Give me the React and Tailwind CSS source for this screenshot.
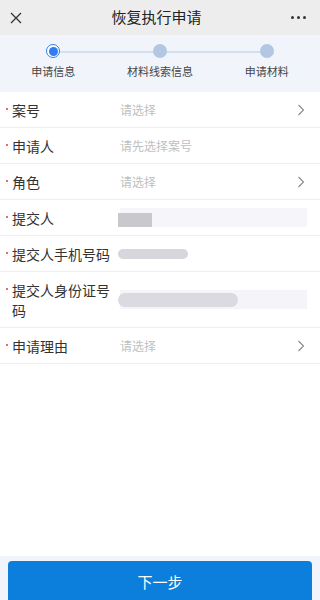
const font = { fontFamily: '"Noto Sans CJK SC", "Noto Sans", sans-serif' }

function Chevron() {
  return (
    <svg className="w-[12px] h-[12px] text-[#888]" viewBox="0 0 12 12" fill="none" stroke="currentColor" strokeWidth="1.1">
      <path d="M3.5 1l5 5-5 5" />
    </svg>
  )
}

function Row({ label, placeholder, arrow, children }) {
  return (
    <div className="flex items-center py-[7.5px] border-b border-[#eeeeee]">
      <div className="relative w-[120px] pl-[12px] pr-[6px] flex-shrink-0">
        <span className="absolute left-[6px] top-[8px] w-[2px] h-[2px] rounded-full bg-[#e23b3b]" />
        <span className="block text-[14px] leading-[20px] text-[#333]">{label}</span>
      </div>
      <div className="flex-1 min-w-0 pr-[13px] flex items-center">
        {children ? children : <span className="flex-1 text-[12px] text-[#c0c0c0]">{placeholder}</span>}
        {arrow && <Chevron />}
      </div>
    </div>
  )
}

export default function App() {
  return (
    <div className="w-[320px] h-[600px] overflow-hidden flex flex-col bg-white" style={font}>
      {/* header */}
      <div className="h-[35px] flex items-center justify-between px-[10px] bg-[#ededed] flex-shrink-0">
        <svg className="w-[12px] h-[12px] text-[#333]" viewBox="0 0 12 12" fill="none" stroke="currentColor" strokeWidth="1.3">
          <path d="M1 1l10 10M11 1L1 11" />
        </svg>
        <span className="text-[15px] text-[#222]">恢复执行申请</span>
        <div className="flex gap-[3px] pr-[4px]">
          <span className="w-[3px] h-[3px] rounded-full bg-[#333]" />
          <span className="w-[3px] h-[3px] rounded-full bg-[#333]" />
          <span className="w-[3px] h-[3px] rounded-full bg-[#333]" />
        </div>
      </div>

      {/* steps */}
      <div className="h-[57px] bg-[#f1f5fb] relative flex-shrink-0">
        <div className="absolute left-[52px] right-[54px] top-[16px] h-[2px] bg-[#d3e0f0]" />
        <div className="grid grid-cols-3 pt-[9px] relative">
          <div className="flex flex-col items-center">
            <span className="w-[14px] h-[14px] rounded-full border-[1.5px] border-[#2f7df0] bg-white flex items-center justify-center">
              <span className="w-[9px] h-[9px] rounded-full bg-[#2f7df0]" />
            </span>
            <span className="mt-[5px] text-[11px] text-[#444]">申请信息</span>
          </div>
          <div className="flex flex-col items-center">
            <span className="w-[14px] h-[14px] rounded-full bg-[#b3c7e2]" />
            <span className="mt-[5px] text-[11px] text-[#444]">材料线索信息</span>
          </div>
          <div className="flex flex-col items-center">
            <span className="w-[14px] h-[14px] rounded-full bg-[#b3c7e2]" />
            <span className="mt-[5px] text-[11px] text-[#444]">申请材料</span>
          </div>
        </div>
      </div>

      {/* form */}
      <div className="flex-1">
        <Row label="案号" placeholder="请选择" arrow />
        <Row label="申请人" placeholder="请先选择案号" />
        <Row label="角色" placeholder="请选择" arrow />
        <Row label="提交人">
          <div className="flex-1 h-[19px] bg-[#f6f6fa] flex items-end">
            <span className="w-[34px] h-[14px] bg-[#c9c9cd] -ml-[2px]" />
          </div>
        </Row>
        <Row label="提交人手机号码">
          <div className="flex-1 h-[19px] flex items-center">
            <span className="w-[70px] h-[10px] rounded-full bg-[#d6d6dc] -ml-[2px]" />
          </div>
        </Row>
        <Row label="提交人身份证号码">
          <div className="flex-1 h-[19px] bg-[#f4f4f9] flex items-center">
            <span className="w-[120px] h-[14px] rounded-full bg-[#dadae0] -ml-[2px]" />
          </div>
        </Row>
        <Row label="申请理由" placeholder="请选择" arrow />
      </div>

      {/* footer */}
      <div className="h-[44px] bg-[#f1f5fb] px-[8px] pt-[5px] flex-shrink-0">
        <div className="h-[44px] rounded-[4px] bg-[#0c7fdc] flex items-start justify-center pt-[10px]">
          <span className="text-[15px] text-white">下一步</span>
        </div>
      </div>
    </div>
  )
}
